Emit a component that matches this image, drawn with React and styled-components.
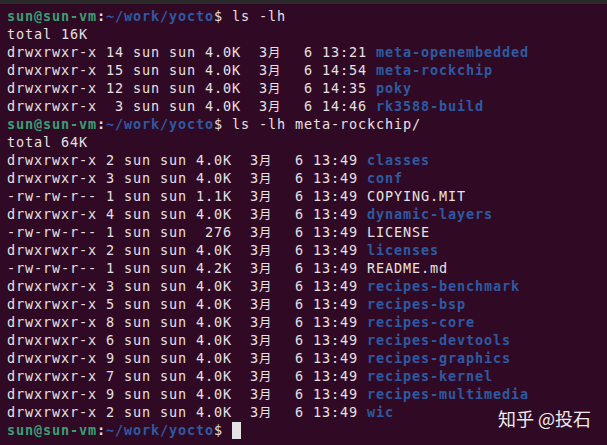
import React from 'react'
import styled, { createGlobalStyle } from 'styled-components'

const GlobalStyle = createGlobalStyle`
	html, body {
		margin: 0;
		padding: 0;
		background: #300a24;
	}
`

const colors = {
	bg: '#300a24',
	bar: '#2b2a2b',
	text: '#e6e1e3',
	green: '#3a9e74',
	blue: '#2d5aa2',
}

const first = [
	['drwxrwxr-x 14 sun sun 4.0K  ', '  6 13:21 ', 'meta-openembedded', true],
	['drwxrwxr-x 15 sun sun 4.0K  ', '  6 14:54 ', 'meta-rockchip', true],
	['drwxrwxr-x 12 sun sun 4.0K  ', '  6 14:35 ', 'poky', true],
	['drwxrwxr-x  3 sun sun 4.0K  ', '  6 14:46 ', 'rk3588-build', true],
]

const second = [
	['drwxrwxr-x 2 sun sun 4.0K  ', '  6 13:49 ', 'classes', true],
	['drwxrwxr-x 3 sun sun 4.0K  ', '  6 13:49 ', 'conf', true],
	['-rw-rw-r-- 1 sun sun 1.1K  ', '  6 13:49 ', 'COPYING.MIT', false],
	['drwxrwxr-x 4 sun sun 4.0K  ', '  6 13:49 ', 'dynamic-layers', true],
	['-rw-rw-r-- 1 sun sun  276  ', '  6 13:49 ', 'LICENSE', false],
	['drwxrwxr-x 2 sun sun 4.0K  ', '  6 13:49 ', 'licenses', true],
	['-rw-rw-r-- 1 sun sun 4.2K  ', '  6 13:49 ', 'README.md', false],
	['drwxrwxr-x 3 sun sun 4.0K  ', '  6 13:49 ', 'recipes-benchmark', true],
	['drwxrwxr-x 5 sun sun 4.0K  ', '  6 13:49 ', 'recipes-bsp', true],
	['drwxrwxr-x 8 sun sun 4.0K  ', '  6 13:49 ', 'recipes-core', true],
	['drwxrwxr-x 6 sun sun 4.0K  ', '  6 13:49 ', 'recipes-devtools', true],
	['drwxrwxr-x 9 sun sun 4.0K  ', '  6 13:49 ', 'recipes-graphics', true],
	['drwxrwxr-x 7 sun sun 4.0K  ', '  6 13:49 ', 'recipes-kernel', true],
	['drwxrwxr-x 9 sun sun 4.0K  ', '  6 13:49 ', 'recipes-multimedia', true],
	['drwxrwxr-x 2 sun sun 4.0K  ', '  6 13:49 ', 'wic', true],
]

const Prompt = ({ command, cursor }) => (
	<Line>
		<User>sun@sun-vm</User>
		<Colon>:</Colon>
		<Path>~/work/yocto</Path>
		<Plain>{'$ ' + command}</Plain>
		{cursor && <Cursor />}
	</Line>
)

const Entry = ({ entry }) => {
	const [head, tail, name, isDir] = entry
	return (
		<Line>
			<Plain>{head}</Plain>
			<Month>
				3<Wide>月</Wide>
			</Month>
			<Plain>{tail}</Plain>
			<Name dir={isDir}>{name}</Name>
		</Line>
	)
}

const App = () => {
	return (
		<Window>
			<GlobalStyle />
			<TopBar />
			<Screen>
				<Prompt command="ls -lh" />
				<Line>total 16K</Line>
				{first.map(e => (
					<Entry key={e[2]} entry={e} />
				))}
				<Prompt command="ls -lh meta-rockchip/" />
				<Line>total 64K</Line>
				{second.map(e => (
					<Entry key={e[2]} entry={e} />
				))}
				<Prompt command="" cursor />
			</Screen>
			<Watermark>知乎 @投石</Watermark>
		</Window>
	)
}

export default App

const Window = styled.div`
	position: relative;
	width: 607px;
	height: 445px;
	overflow: hidden;
	background-color: ${colors.bg};
	display: flex;
	flex-direction: column;
`

const TopBar = styled.div`
	height: 4px;
	flex: none;
	background-color: ${colors.bar};
`

const Screen = styled.div`
	display: flex;
	flex-direction: column;
	padding: 3px 0 0 7px;
	font-family: 'DejaVu Sans Mono', 'Liberation Mono', monospace;
	font-size: 13.5px;
	letter-spacing: 0.87px;
	color: ${colors.text};
`

const Line = styled.div`
	height: 18px;
	line-height: 18px;
	white-space: pre;
	display: flex;
	align-items: center;
`

const Plain = styled.span``

const User = styled.span`
	color: ${colors.green};
	font-weight: 700;
`

const Colon = styled.span`
	color: ${colors.text};
	font-weight: 700;
`

const Path = styled.span`
	color: ${colors.blue};
	font-weight: 700;
`

const Name = styled.span`
	color: ${props => (props.dir ? colors.blue : colors.text)};
	font-weight: ${props => (props.dir ? 700 : 400)};
`

const Month = styled.span`
	display: inline-flex;
	align-items: center;
	width: 27px;
	overflow: hidden;
`

const Wide = styled.span`
	display: inline-block;
	width: 18px;
	letter-spacing: 0;
	font-family: 'Noto Sans CJK SC', sans-serif;
	font-size: 12.4px;
	line-height: 18px;
`

const Cursor = styled.span`
	display: inline-block;
	width: 9px;
	height: 17px;
	background-color: ${colors.text};
`

const Watermark = styled.div`
	position: absolute;
	right: 16px;
	bottom: 14px;
	font-family: 'Noto Sans CJK SC', 'Noto Sans', sans-serif;
	font-size: 18px;
	color: #ececec;
`
